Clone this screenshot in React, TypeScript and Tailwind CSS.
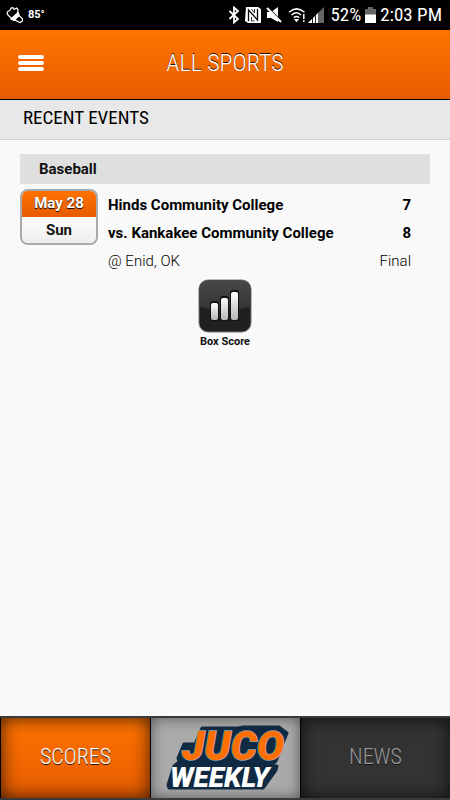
import type { ReactNode } from "react";

type TeamLine = {
  name: string;
  score: number;
};

type SportEvent = {
  id: string;
  date: string;
  day: string;
  teams: TeamLine[];
  location: string;
  status: string;
};

type SportGroup = {
  sport: string;
  events: SportEvent[];
};

const groups: SportGroup[] = [
  {
    sport: "Baseball",
    events: [
      {
        id: "hinds-kankakee",
        date: "May 28",
        day: "Sun",
        teams: [
          { name: "Hinds Community College", score: 7 },
          { name: "vs. Kankakee Community College", score: 8 },
        ],
        location: "@ Enid, OK",
        status: "Final",
      },
    ],
  },
];

const narrow = "font-['Roboto_Condensed','Liberation_Sans_Narrow','Roboto',sans-serif]";

function StatusBar() {
  return (
    <div className="flex h-[30px] items-center justify-between bg-black pr-2 pl-1.5 text-white">
      <div className="flex items-center gap-1">
        <svg width="18" height="18" viewBox="0 0 18 18" fill="none" stroke="white" strokeWidth="1.2">
          <path d="M6 13 1.5 8.5 1.2 6 4.2 4.2 5 2 7 1.6 8.2 3.4 10.5 2 12 3.5 11.5 7.5" />
          <path d="M5 13 12 6.5 13.2 9 8 14.5Z" fill="white" />
          <path d="M8.5 13.8 13 9.5 16.3 12.5 16.5 15 14 16.5Z" />
        </svg>
        <span className="text-[11px] font-bold">85°</span>
      </div>
      <div className="flex items-center">
        <svg width="12" height="18" viewBox="0 0 12 18" fill="none" stroke="white" strokeWidth="1.8">
          <path d="M1.5 5 10 13 6 16.5V1.5L10 5 1.5 13" />
        </svg>
        <svg className="ml-[5px]" width="16" height="16" viewBox="0 0 16 16">
          <path d="M1 0H13L16 2V16H3L0 14Z" fill="white" />
          <path d="M3.5 14V3L12.5 13V2" fill="none" stroke="black" strokeWidth="1.3" />
          <path d="M6.5 2 9.5 6V2M6.5 10V14L9.5 14" fill="none" stroke="black" strokeWidth="0.8" />
        </svg>
        <svg className="ml-[5px]" width="16" height="16" viewBox="0 0 16 16" fill="white">
          <path d="M1 5h4l7-5v15l-7-4H1Z" />
          <path d="M1.5 0 15.5 14" stroke="black" strokeWidth="1.2" />
          <path d="M1 1 15 15" stroke="white" strokeWidth="2" />
        </svg>
        <svg className="ml-1.5" width="18" height="16" viewBox="0 0 18 16" fill="none" stroke="white" strokeWidth="1.5">
          <path d="M1 5.2Q8.5-1.5 16.5 5.2M3.5 8Q8.5 3.5 13 8M5.8 10.7Q8.5 8.3 11.2 10.7" />
          <path d="M7.5 12.8h2L8.5 14ZM15.8 7V12M15.8 13.2V15" />
        </svg>
        <svg className="ml-0.5" width="16" height="16" viewBox="0 0 16 16">
          <path d="M0 16 16 0V16Z" fill="#666" />
          <path d="M0 16 10 6V16Z" fill="white" />
          <path d="M4.5 11v5M7.5 8v8" stroke="#222" strokeWidth="1" />
        </svg>
        <span className={`${narrow} ml-1.5 text-[19px]`}>52%</span>
        <svg className="mx-1" width="11" height="16" viewBox="0 0 11 16">
          <path d="M3 0H8V2H11V16H0V2H3Z" fill="#666" />
          <path d="M0 7.5H11V16H0Z" fill="white" />
        </svg>
        <span className={`${narrow} text-[19px]`}>2:03 PM</span>
      </div>
    </div>
  );
}

function Header() {
  return (
    <header className="grid h-[70px] grid-cols-[1fr_auto_1fr] items-center border-b border-black bg-linear-to-b from-[#ff7500] to-[#e65c00] px-[18px] pb-[3px]">
      <button type="button" aria-label="Menu" className="flex w-[26px] flex-col gap-[2px] justify-self-start">
        <span className="h-1 rounded-full bg-white shadow-[0_0_1px_#ff3000]" />
        <span className="h-1 rounded-full bg-white shadow-[0_0_1px_#ff3000]" />
        <span className="h-1 rounded-full bg-white shadow-[0_0_1px_#ff3000]" />
      </button>
      <h1 className={`${narrow} text-[24px] font-light text-white [text-shadow:0_-1px_0_#301000]`}>ALL SPORTS</h1>
    </header>
  );
}

function DateBadge({ date, day }: { date: string; day: string }) {
  return (
    <div className="h-14 w-[78px] shrink-0 overflow-hidden rounded-lg border-2 border-[#a9a9a9] text-center text-[15px] font-bold">
      <div className="h-[26px] bg-linear-to-b from-[#ff7200] to-[#e65c00] leading-6 text-white [text-shadow:0_1px_1px_#000]">
        {date}
      </div>
      <div className="h-[26px] bg-linear-to-b from-white to-[#ededed] leading-[26px]">{day}</div>
    </div>
  );
}

function BoxScoreButton() {
  return (
    <button type="button" className="mx-auto mt-1 flex flex-col items-center text-[11px] leading-4 font-bold">
      <svg width="54" height="54" viewBox="0 0 54 54" className="mb-px">
        <defs>
          <linearGradient id="tile" x2="0" y2="1">
            <stop offset="0" stopColor="#484848" />
            <stop offset="1" stopColor="#333" />
          </linearGradient>
          <linearGradient id="bar" x2="0" y2="1">
            <stop offset="0" stopColor="#fff" />
            <stop offset="1" stopColor="#b4b4b4" />
          </linearGradient>
        </defs>
        <rect x="1" y="1" width="52" height="52" rx="9" fill="#202020" stroke="#777" />
        <path d="M1.5 28V10Q1.5 1.5 10 1.5H44Q52.5 1.5 52.5 10V28Q27 34 1.5 28Z" fill="url(#tile)" />
        <g fill="#111">
          <rect x="12" y="22" width="9" height="20" rx="3" />
          <rect x="22" y="17" width="9" height="25" rx="3" />
          <rect x="32" y="11" width="9" height="31" rx="3" />
        </g>
        <g fill="url(#bar)">
          <rect x="13" y="24" width="7" height="17" rx="2" />
          <rect x="23" y="19" width="7" height="22" rx="2" />
          <rect x="33" y="13" width="7" height="28" rx="2" />
        </g>
      </svg>
      Box Score
    </button>
  );
}

function EventRow({ event }: { event: SportEvent }) {
  return (
    <article>
      <div className="mt-[5px] flex gap-2.5 pr-[19px]">
        <DateBadge date={event.date} day={event.day} />
        <div className="grow pt-0.5 text-[15px] leading-7 text-black">
          {event.teams.map((team) => (
            <div key={team.name} className="flex justify-between font-bold">
              <span>{team.name}</span>
              <span>{team.score}</span>
            </div>
          ))}
          <div className="flex justify-between font-light">
            <span>{event.location}</span>
            <span>{event.status}</span>
          </div>
        </div>
      </div>
      <BoxScoreButton />
    </article>
  );
}

function JucoLogo() {
  return (
    <svg
      width="148"
      height="80"
      viewBox="0 0 148 80"
      role="img"
      aria-label="JUCO Weekly"
      className="font-['Roboto',sans-serif] font-black italic"
    >
      <path
        d="M50 10H86L91 9H127L135 15 124 43 120 47 125 48 124 52 111 70H17L16 67 22 48 27 44 26 40 32 26H43Z"
        fill="#102a43"
        stroke="#102a43"
        strokeWidth="3"
        strokeLinejoin="round"
      />
      <text x="30" y="42" fontSize="41" fill="#ff6f00" stroke="#8fa3b3" strokeWidth="1.5" paintOrder="stroke">
        JUCO
      </text>
      <text x="18" y="69" fontSize="28" fill="white">
        WEEKLY
      </text>
    </svg>
  );
}

function TabButton({ className, children }: { className: string; children: ReactNode }) {
  return (
    <button
      type="button"
      className={`${narrow} flex flex-1 basis-0 items-center justify-center border-l border-black text-[22px] font-light ${className}`}
    >
      {children}
    </button>
  );
}

export default function App() {
  return (
    <div className="flex min-h-screen flex-col bg-[#f9f9f9] font-['Roboto',sans-serif] text-[#111]">
      <StatusBar />
      <Header />
      <main className="grow">
        <h2 className={`${narrow} h-10 border-b border-[#d2d2d2] bg-[#e8e8e8] px-[23px] text-[19px] leading-9 text-black`}>
          RECENT EVENTS
        </h2>
        {groups.map((group) => (
          <section key={group.sport} className="px-5 pt-3.5">
            <h3 className="h-[30px] bg-[#dfdfdf] px-[19px] text-[15px] leading-[30px] font-bold">{group.sport}</h3>
            {group.events.map((event) => (
              <EventRow key={event.id} event={event} />
            ))}
          </section>
        ))}
      </main>
      <nav className="flex h-[84px] border-t-2 border-b-2 border-[#3a3a3a]">
        <TabButton className="bg-linear-to-b from-[#ff7300] to-[#e65c00] pb-[3px] text-white shadow-[inset_0_0_18px_#000000c0] [text-shadow:0_1px_0_#301000]">
          SCORES
        </TabButton>
        <TabButton className="bg-[#aaa] shadow-[inset_0_0_14px_#00000080]">
          <JucoLogo />
        </TabButton>
        <TabButton className="bg-[#333] pb-[3px] text-[#999] shadow-[inset_0_0_18px_#000000c0] [text-shadow:0_1px_0_#111]">
          NEWS
        </TabButton>
      </nav>
    </div>
  );
}
